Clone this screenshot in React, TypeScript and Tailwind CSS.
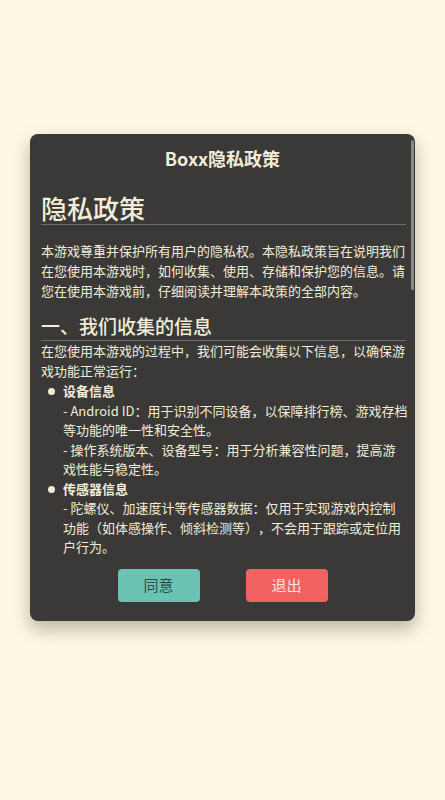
import React from 'react';

const font = { fontFamily: '"Noto Sans CJK SC", "Noto Sans", sans-serif' };

const Bullet: React.FC<{ title: string; lines: string[] }> = ({ title, lines }) => (
  <div className="flex">
    <div className="w-[22px] shrink-0 flex justify-center pt-[7px] pr-[2px]">
      <span className="block w-[7px] h-[7px] rounded-full bg-[#f2ecd8]" />
    </div>
    <div className="flex-1 min-w-0">
      <div className="font-bold">{title}</div>
      {lines.map((l) => (
        <div key={l}>{l}</div>
      ))}
    </div>
  </div>
);

export default function App() {
  return (
    <div className="min-h-[800px] bg-[#fdf9e5] pt-[134px]" style={font}>
      <div className="relative ml-[30px] w-[385px] h-[487px] rounded-lg bg-[#3a3937] shadow-[0_8px_18px_rgba(60,50,20,0.35)] flex flex-col pt-3 pb-[19px] [text-spacing-trim:space-all]">
        <div className="h-6 leading-6 text-center text-[18px] font-bold text-[#f2ecd8]">Boxx隐私政策</div>

        <div className="mt-2.5 h-[380px] overflow-hidden pl-[11px] pr-[7px] pt-[11px] text-[13px] text-[#f2ecd8]">
          <h1 className="text-[26px] leading-[33px] font-medium border-b border-[#6e6c68] mr-[2px]">隐私政策</h1>
          <p className="mt-4 leading-5">
            本游戏尊重并保护所有用户的隐私权。本隐私政策旨在说明我们在您使用本游戏时，如何收集、使用、存储和保护您的信息。请您在使用本游戏前，仔细阅读并理解本政策的全部内容。
          </p>
          <h2 className="mt-[11px] text-[19px] leading-[28px] font-medium border-b border-[#6e6c68] mr-[2px]">一、我们收集的信息</h2>
          <p className="leading-5">在您使用本游戏的过程中，我们可能会收集以下信息，以确保游戏功能正常运行：</p>
          <div className="leading-[19.5px]">
            <Bullet
              title="设备信息"
              lines={[
                '- Android ID：用于识别不同设备，以保障排行榜、游戏存档等功能的唯一性和安全性。',
                '- 操作系统版本、设备型号：用于分析兼容性问题，提高游戏性能与稳定性。',
              ]}
            />
            <Bullet
              title="传感器信息"
              lines={['- 陀螺仪、加速度计等传感器数据：仅用于实现游戏内控制功能（如体感操作、倾斜检测等），不会用于跟踪或定位用户行为。']}
            />
          </div>
        </div>

        <div className="mt-[9px] flex justify-center gap-[46px]">
          <button className="w-[82px] h-[33px] rounded-[4px] bg-[#6cc3b4] text-[15px] text-[#2a5049]">同意</button>
          <button className="w-[82px] h-[33px] rounded-[4px] bg-[#f06262] text-[15px] text-[#ffe4df]">退出</button>
        </div>

        <div className="absolute right-[1px] top-[6px] w-[3px] h-[150px] rounded-full bg-[#8a8884]" />
      </div>
    </div>
  );
}
